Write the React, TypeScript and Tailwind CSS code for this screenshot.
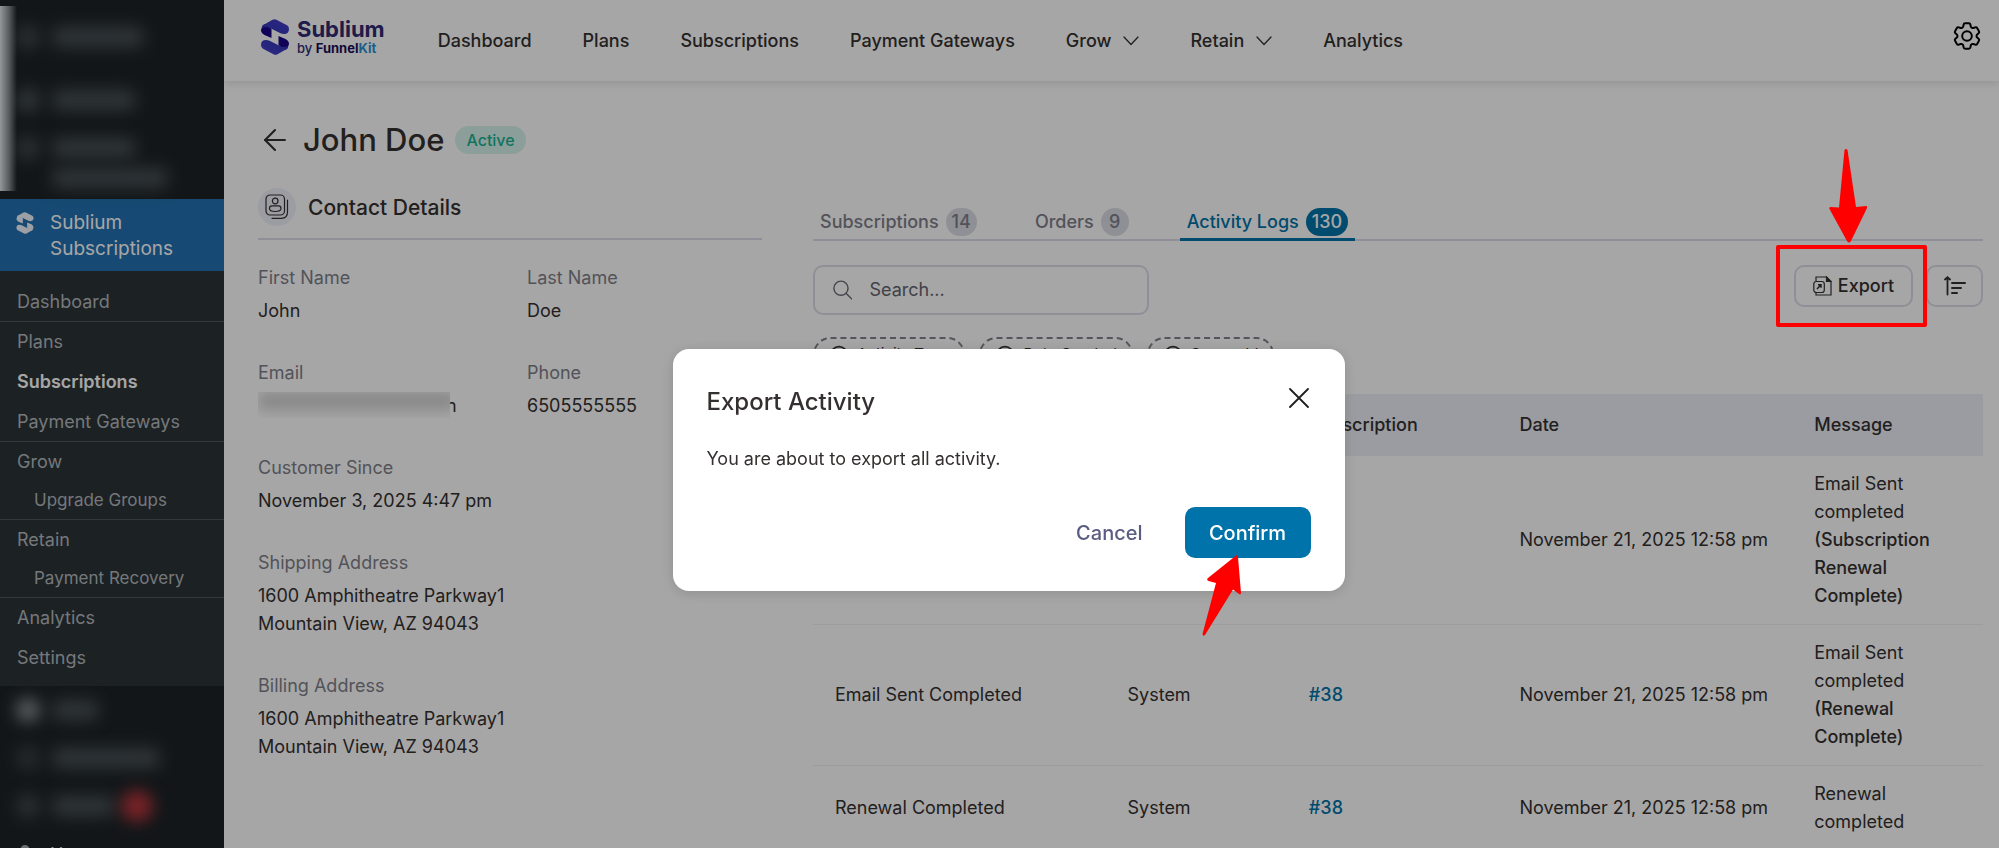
import { useState } from "react";
import type { ReactNode } from "react";
import { ArrowLeft, CirclePlus } from "lucide-react";
import clsx from "clsx";

interface MenuItem {
  label: string;
  active?: boolean;
  child?: boolean;
  divider?: boolean;
}

interface LogRow {
  activity: string;
  source: string;
  subscription: string;
  date: string;
  message: string;
  detail?: string;
}

const menuItems: MenuItem[] = [
  { label: "Dashboard", divider: true },
  { label: "Plans" },
  { label: "Subscriptions", active: true },
  { label: "Payment Gateways", divider: true },
  { label: "Grow" },
  { label: "Upgrade Groups", child: true, divider: true },
  { label: "Retain" },
  { label: "Payment Recovery", child: true, divider: true },
  { label: "Analytics" },
  { label: "Settings" },
];

const navItems = [
  { label: "Dashboard" },
  { label: "Plans" },
  { label: "Subscriptions" },
  { label: "Payment Gateways" },
  { label: "Grow", dropdown: true },
  { label: "Retain", dropdown: true },
  { label: "Analytics" },
];

const tabs = [
  { label: "Subscriptions", count: 14 },
  { label: "Orders", count: 9 },
  { label: "Activity Logs", count: 130 },
];

const filters = ["Activity Type", "Date Created", "Source Id"];

const logs: LogRow[] = [
  {
    activity: "Email Sent Completed",
    source: "System",
    subscription: "#38",
    date: "November 21, 2025 12:58 pm",
    message: "Email Sent completed",
    detail: "(Subscription Renewal Complete)",
  },
  {
    activity: "Email Sent Completed",
    source: "System",
    subscription: "#38",
    date: "November 21, 2025 12:58 pm",
    message: "Email Sent completed",
    detail: "(Renewal Complete)",
  },
  {
    activity: "Renewal Completed",
    source: "System",
    subscription: "#38",
    date: "November 21, 2025 12:58 pm",
    message: "Renewal completed",
  },
];

function SubliumMark({ className, mono }: { className?: string; mono?: boolean }) {
  const light = mono ? "currentColor" : "url(#mark)";
  const dark = mono ? "currentColor" : "#1b0587";
  return (
    <svg viewBox="0 0 28 36" className={className} aria-hidden="true">
      <defs>
        <linearGradient id="mark" x1="0" y1="1" x2="1" y2="0">
          <stop offset="0" stopColor="#2b36b0" />
          <stop offset="1" stopColor="#4a3ed0" />
        </linearGradient>
      </defs>
      {[0, 180].map((turn) => (
        <g key={turn} transform={`rotate(${turn} 14 18)`}>
          <path d="M1 8 Q2 5 5 5 L10.500 10 V19 L3.500 16 Q0 14 0 11 Z" fill={dark} />
          <path
            d="M1.500 6.500 L11.500 .800 Q13.500 -.200 15.500 .800 L26 6.300 Q28 7.500 28 10 Q28 15 23 15 Q21 15 19.500 14.300 L10.500 9.800 Q5 6.500 1 9 Z"
            fill={light}
          />
        </g>
      ))}
    </svg>
  );
}

function ChevronIcon() {
  return (
    <svg width="16" height="10" viewBox="0 0 16 10" fill="none" stroke="currentColor" strokeWidth="1.300" aria-hidden="true">
      <path d="M1 1 L8 8.500 L15 1" strokeLinecap="round" strokeLinejoin="round" />
    </svg>
  );
}

function GearIcon() {
  return (
    <svg width="34" height="34" viewBox="0 0 24 24" fill="none" stroke="#000" strokeWidth="1.400" strokeLinejoin="round" strokeLinecap="round" aria-hidden="true">
      <path d="M9.594 3.940c.09-.542.56-.94 1.110-.94h2.593c.55 0 1.020.398 1.110.94l.213 1.281c.063.374.313.686.645.87.074.04.147.083.22.127.325.196.72.257 1.075.124l1.217-.456a1.125 1.125 0 0 1 1.370.49l1.296 2.247a1.125 1.125 0 0 1-.26 1.431l-1.003.827c-.293.241-.438.613-.43.992a7.723 7.723 0 0 1 0 .255c-.008.378.137.75.43.991l1.004.827c.424.35.534.955.26 1.430l-1.298 2.247a1.125 1.125 0 0 1-1.369.491l-1.217-.456c-.355-.133-.75-.072-1.076.124a6.470 6.470 0 0 1-.22.128c-.331.183-.581.495-.644.869l-.213 1.281c-.09.543-.56.940-1.110.940h-2.594c-.55 0-1.019-.398-1.110-.94l-.213-1.281c-.062-.374-.312-.686-.644-.87a6.520 6.520 0 0 1-.22-.127c-.325-.196-.72-.257-1.076-.124l-1.217.456a1.125 1.125 0 0 1-1.369-.49l-1.297-2.247a1.125 1.125 0 0 1 .26-1.431l1.004-.827c.292-.24.437-.613.430-.991a6.932 6.932 0 0 1 0-.255c.007-.38-.138-.751-.43-.992l-1.004-.827a1.125 1.125 0 0 1-.26-1.430l1.297-2.247a1.125 1.125 0 0 1 1.370-.491l1.216.456c.356.133.751.072 1.076-.124.072-.044.146-.086.220-.128.332-.183.582-.495.644-.869l.214-1.280Z" />
      <circle cx="12" cy="12" r="3.400" />
    </svg>
  );
}

function ContactIcon() {
  return (
    <svg width="24" height="26" viewBox="0 0 24 26" fill="none" stroke="#353030" strokeWidth="1.200" strokeLinecap="round" aria-hidden="true">
      <rect x="1" y="1" width="18.500" height="20" rx="4" />
      <circle cx="10.200" cy="7" r="2.800" />
      <path d="M4.500 14.500 Q4.500 11.800 7 11.800 H13.500 Q16 11.800 16 14.500 Q16 17.500 10.200 17.500 Q4.500 17.500 4.500 14.500 Z" />
      <path d="M22.500 6 V18 Q22.500 24.300 16.500 24.300 H7" />
    </svg>
  );
}

function ExportIcon() {
  return (
    <svg width="19" height="20" viewBox="0 0 19 20" fill="none" stroke="#353030" strokeWidth="1.200" aria-hidden="true">
      <path d="M3 5 V1 H13.500 L18 5.500 V19 H3 V16.500" />
      <path d="M13.500 1 V5.500 H18 Z" fill="#353030" />
      <rect x=".8" y="5.500" width="10.500" height="11" rx="2.500" />
      <path d="M4 13 L7.800 9 M5 8.800 H8 V11.800" strokeWidth="1.500" />
    </svg>
  );
}

function SortIcon() {
  return (
    <svg width="22" height="20" viewBox="0 0 22 20" fill="none" stroke="#353030" strokeWidth="2" strokeLinecap="round" aria-hidden="true">
      <path d="M3.500 18.500 V2 M1 3.500 L3.500 1.200 L6 3.500" strokeWidth="1.800" />
      <path d="M8 7 H21 M8 12 H17 M8 17 H13" />
    </svg>
  );
}

function BlurredRow({ bar, icon, badge }: { bar: string; icon?: string; badge?: boolean }) {
  return (
    <div className="flex h-[30px] items-center pl-4 blur-[8px]">
      <span className={clsx("size-6 shrink-0 rounded-full", icon)} />
      <span className={clsx("ml-[13px] h-5 rounded bg-[#4a5257]", bar)} />
      {badge && <span className="ml-2 size-8 rounded-full bg-[#b8363c]" />}
    </div>
  );
}

function Sidebar() {
  return (
    <aside className="w-56 shrink-0 bg-[#1d2327] text-lg text-[#f0f0f1]">
      <div className="relative h-[199px] pt-[22px]" aria-hidden="true">
        <BlurredRow bar="w-[90px]" icon="bg-[#42494e]" />
        <div className="h-[33px]" />
        <BlurredRow bar="w-[82px]" icon="bg-[#4a5257]" />
        <div className="h-[18px]" />
        <BlurredRow bar="w-[82px]" icon="bg-[#42494e]" />
        <BlurredRow bar="w-[114px]" />
        <div className="absolute top-1.5 left-0 h-[185px] w-[17px] bg-linear-to-r from-[#e4e9ec] via-[#8b9296] to-transparent" />
      </div>
      <a href="#sublium" className="flex h-[72px] gap-[15px] bg-[#2271b1] pt-[11px] pl-[15px] text-white">
        <SubliumMark mono className="mt-[2px] h-[22px] w-5 text-[#f0f4fa]" />
        <span className="text-[19px] leading-[26px]">
          Sublium
          <br />
          Subscriptions
        </span>
      </a>
      <nav className="bg-[#2c3338] pt-[11px] pb-2">
        {menuItems.map((item) => (
          <a
            key={item.label}
            href="#menu"
            className={clsx(
              "flex items-center",
              item.child ? "h-[38px] pl-[34px] text-[17px]" : "h-10 pl-[17px]",
              item.active ? "font-semibold text-white" : "text-[#b4b9be]",
              item.divider && "border-b border-[#50565b]"
            )}
          >
            {item.label}
          </a>
        ))}
      </nav>
      <div className="flex flex-col gap-[18px] pt-[9px]" aria-hidden="true">
        <BlurredRow bar="w-[45px]" icon="bg-[#8a9094]" />
        <BlurredRow bar="w-[106px]" icon="bg-[#3a4145]" />
        <BlurredRow bar="w-[60px]" icon="bg-[#42494e]" badge />
      </div>
      <a href="#users" className="mt-[18px] flex h-8 items-center gap-4 pl-4">
        <svg width="18" height="20" viewBox="0 0 18 20" fill="#a7aaad" aria-hidden="true">
          <circle cx="9" cy="4.500" r="4.500" />
          <path d="M1 20 Q1 10 9 10 Q17 10 17 20 Z" />
        </svg>
        Users
      </a>
    </aside>
  );
}

function Header() {
  return (
    <header className="flex h-[81px] items-center pr-[15px] pl-[37px] text-[#353030] shadow-[0_2px_8px_rgba(0,0,0,0.12)]">
      <a href="#home" className="mr-[53px] flex items-center gap-2 pb-2">
        <SubliumMark className="h-9 w-7" />
        <span className="flex flex-col">
          <span className="text-[22px] leading-[24px] font-bold text-[#302a72]">Sublium</span>
          <span className="text-[13px] leading-[15px] font-medium text-[#302a72]">
            by <b className="text-[#1b0f55]">Funnel</b>
            <b className="text-[#2a94d6]">Kit</b>
          </span>
        </span>
      </a>
      <nav className="flex items-center gap-[51px] text-lg font-medium">
        {navItems.map((item) => (
          <a key={item.label} href="#nav" className="flex items-center gap-3">
            {item.label}
            {item.dropdown && <ChevronIcon />}
          </a>
        ))}
      </nav>
      <button type="button" aria-label="Settings" className="ml-auto pb-[10px]">
        <GearIcon />
      </button>
    </header>
  );
}

function Field({ label, children }: { label: string; children: ReactNode }) {
  return (
    <div className="leading-7">
      <dt className="text-[#7f808a]">{label}</dt>
      <dd className="mt-[5px] text-[#353030]">{children}</dd>
    </div>
  );
}

function ContactDetails() {
  return (
    <section className="w-[504px] shrink-0">
      <div className="flex h-[52px] items-start gap-3 border-b-2 border-[#dcdde9]">
        <span className="flex size-[38px] items-center justify-center rounded-full bg-[#f0f1f9]">
          <ContactIcon />
        </span>
        <h2 className="text-[21px] leading-[40px] font-medium text-[#353030]">Contact Details</h2>
      </div>
      <dl className="mt-6 flex flex-col gap-[34px] text-lg">
        <div className="grid grid-cols-[269px_1fr] gap-y-[34px]">
          <Field label="First Name">John</Field>
          <Field label="Last Name">Doe</Field>
          <Field label="Email">
            <span className="flex">
              <span className="z-10 h-[26px] w-[192px] overflow-hidden bg-white" aria-hidden="true">
                <span className="block h-[18px] w-[198px] bg-[#d0d0d0] blur-[7px]" />
              </span>
              <span className="-ml-1">n</span>
            </span>
          </Field>
          <Field label="Phone">6505555555</Field>
        </div>
        <Field label="Customer Since">November 3, 2025 4:47 pm</Field>
        <Field label="Shipping Address">
          1600 Amphitheatre Parkway1
          <br />
          Mountain View, AZ 94043
        </Field>
        <Field label="Billing Address">
          1600 Amphitheatre Parkway1
          <br />
          Mountain View, AZ 94043
        </Field>
      </dl>
    </section>
  );
}

function Toolbar() {
  return (
    <div className="mt-6 flex items-start">
      <label className="flex h-[50px] w-[336px] items-center gap-[17px] rounded-[10px] border-2 border-[#dcdde9] pl-[18px]">
        <svg width="22" height="22" viewBox="0 0 22 22" fill="none" stroke="#6b6c76" strokeWidth="1.600" strokeLinecap="round" aria-hidden="true">
          <circle cx="9" cy="9" r="8" />
          <path d="M15 15 L21 21" />
        </svg>
        <input
          type="text"
          aria-label="Search"
          placeholder="Search..."
          className="w-full bg-transparent text-lg outline-none placeholder:text-[#64656f]"
        />
      </label>
      <div className="ml-auto flex gap-[13px]">
        <div className="relative">
          <button
            type="button"
            className="flex h-[42px] w-[119px] items-center justify-center gap-1.5 rounded-[10px] border-2 border-[#dcdde9] text-lg font-medium text-[#353030]"
          >
            <ExportIcon />
            Export
          </button>
          {/* Callout around the export button */}
          <div className="absolute -inset-y-5 -right-[14px] -left-[18px] z-50 rounded-xs border-4 border-[#fe0000]" />
          <svg className="absolute -top-[116px] left-[35px] z-50" width="38" height="94" viewBox="0 0 38 94" fill="#fe0000" aria-hidden="true">
            <path d="M15.500 1 Q17 -1 18.500 1 L27 58 L37 57 Q38.500 57 38 59 L22 92 Q20 95 18 92 L.5 60 Q0 58 1.500 58 L10 58.500 Z" />
          </svg>
        </div>
        <button
          type="button"
          aria-label="Sort"
          className="flex h-[42px] w-[57px] items-center justify-center rounded-[10px] border-2 border-[#dcdde9]"
        >
          <SortIcon />
        </button>
      </div>
    </div>
  );
}

function ActivityPanel() {
  const [current, setCurrent] = useState("Activity Logs");

  return (
    <section className="min-w-0 flex-1 pt-5">
      <div role="tablist" className="flex gap-11 border-b-2 border-[#dcdde9]">
        {tabs.map((tab) => {
          const selected = tab.label === current;
          return (
            <button
              key={tab.label}
              type="button"
              role="tab"
              aria-selected={selected}
              onClick={() => setCurrent(tab.label)}
              className={clsx(
                "-mb-0.5 flex items-center gap-[7px] border-b-3 px-[7px] pb-0.5 text-lg leading-7 font-medium",
                selected ? "border-[#0073aa] text-[#0073aa]" : "border-transparent text-[#7f808a]"
              )}
            >
              {tab.label}
              <span
                className={clsx(
                  "h-7 rounded-[14px] px-1.5",
                  selected ? "bg-[#0073aa] text-white" : "min-w-7 bg-[#dcdde6] text-center"
                )}
              >
                {tab.count}
              </span>
            </button>
          );
        })}
      </div>

      <Toolbar />

      <div className="mt-[22px] flex gap-[14px]">
        {filters.map((filter) => (
          <button
            key={filter}
            type="button"
            className="flex h-[35px] items-center gap-2 rounded-full border-2 border-dashed border-[#82838e] px-[14px] text-[15px] text-[#353030]"
          >
            <CirclePlus className="size-5" />
            {filter}
          </button>
        ))}
      </div>

      <table className="mt-[22px] w-full table-fixed text-left text-lg leading-7 text-[#353030]">
        <thead>
          <tr className="h-[62px] bg-[#eff0f7]">
            <th className="w-[25%] px-[22px] font-medium">Activity</th>
            <th className="w-[15.500%] px-[22px] font-medium">Source</th>
            <th className="w-[18%] px-[22px] font-medium">Subscription</th>
            <th className="w-[25.200%] px-[22px] font-medium">Date</th>
            <th className="px-[22px] font-medium">Message</th>
          </tr>
        </thead>
        <tbody>
          {logs.map((log, index) => (
            <tr key={index} className="border-b border-[#f2f2f5]">
              <td className="px-[22px]">{log.activity}</td>
              <td className="px-[22px]">{log.source}</td>
              <td className="px-[22px]">
                <a href="#subscription" className="font-medium text-[#0073aa]">
                  {log.subscription}
                </a>
              </td>
              <td className="pl-[22px] whitespace-nowrap">{log.date}</td>
              <td className="px-[22px] py-[14px]">
                {log.message} {log.detail && <b className="font-medium">{log.detail}</b>}
              </td>
            </tr>
          ))}
        </tbody>
      </table>
    </section>
  );
}

function ExportDialog() {
  return (
    <div className="fixed inset-0 z-40 flex items-center justify-center bg-black/35 pt-[92px] pl-[18px]">
      <div
        role="dialog"
        aria-modal="true"
        aria-labelledby="export-title"
        className="w-[672px] rounded-2xl bg-white px-[34px] pt-[33px] pb-[33px] shadow-[0_2px_14px_rgba(0,0,0,0.15)]"
      >
        <div className="flex items-start justify-between">
          <h2 id="export-title" className="pt-1 text-2xl font-medium text-[#353030]">
            Export Activity
          </h2>
          <button type="button" aria-label="Close" className="-mr-1 p-1.5">
            <svg width="20" height="20" viewBox="0 0 20 20" stroke="#1e1e1e" strokeWidth="1.800" strokeLinecap="round" aria-hidden="true">
              <path d="M1 1 L19 19 M19 1 L1 19" />
            </svg>
          </button>
        </div>
        <p className="mt-[27px] text-lg leading-7 text-[#353030]">You are about to export all activity.</p>
        <div className="mt-[34px] flex justify-end gap-[18px] text-xl font-medium">
          <button type="button" className="h-[51px] px-6 text-[#5b5c82]">
            Cancel
          </button>
          <div className="relative">
            <button type="button" className="h-[51px] w-[126px] rounded-[10px] bg-[#0073aa] text-white">
              Confirm
            </button>
            <svg className="absolute top-12 left-[17px]" width="40" height="82" viewBox="0 0 40 82" fill="#fe0000" aria-hidden="true">
              <path d="M33.500 1 Q36 -1 36 2 L39 38 Q39 40 37 39 L31 34.500 L3 80 Q1 82 .500 79 L14 28 L6.500 26 Q4 25 6 23 Z" />
            </svg>
          </div>
        </div>
      </div>
    </div>
  );
}

export default function App() {
  return (
    <div className="flex h-screen overflow-hidden bg-white font-['Inter','Liberation_Sans',sans-serif]">
      <Sidebar />
      <div className="min-w-0 flex-1">
        <Header />
        <main className="pr-4 pl-[34px]">
          <div className="flex items-center gap-[11px] pt-9">
            <a href="#back" aria-label="Back" className="text-[#353030]">
              <ArrowLeft className="size-[34px]" strokeWidth={1.500} />
            </a>
            <h1 className="text-[31px] leading-[46px] font-medium text-[#353030]">John Doe</h1>
            <span className="rounded-full bg-[#d8f3ec] px-[11px] text-base leading-7 font-medium text-[#1bb394]">
              Active
            </span>
          </div>
          <div className="flex gap-[51px] pt-[25px]">
            <ContactDetails />
            <ActivityPanel />
          </div>
        </main>
      </div>
      <ExportDialog />
    </div>
  );
}
